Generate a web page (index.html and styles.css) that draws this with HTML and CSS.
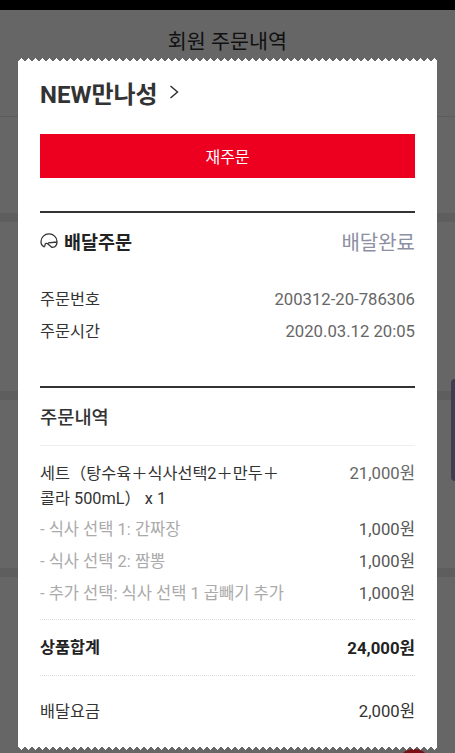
FILE: index.html
```html
<!DOCTYPE html>
<html lang="ko">
<head>
<meta charset="utf-8">
<title>회원 주문내역</title>
<link rel="stylesheet" href="styles.css">
</head>
<body>
<div class="page">
  <div class="statusbar"></div>
  <header class="appbar"><h1>회원 주문내역</h1></header>
  <div class="bg-section s1"></div>
  <div class="bg-section s2"></div>
  <div class="bg-section s3"></div>
  <div class="bg-section s4"></div>
  <div class="side-tab"></div>
  <div class="red-dot"></div>

  <main class="receipt">
    <div class="store">
      <span>NEW만나성</span>
      <svg class="chev" width="12" height="16" viewBox="0 0 12 16"><path d="M2.5 2 L9.5 8 L2.5 14" fill="none" stroke="#333" stroke-width="1.5"/></svg>
    </div>
    <button class="reorder">재주문</button>

    <section class="block delivery">
      <div class="delivery-head">
        <div class="delivery-type">
          <svg width="18" height="18" viewBox="0 0 18 18"><path d="M4 14.8 C1.6 13.4 .9 11 1 9.5 A8 7.6 0 0 1 17 9.5 C17 12 16.2 14 14.5 14.8 L12 15.4 L8 12 C6.8 10.8 5 11.4 5 13 C5 14 4.6 14.6 4 14.8 M8.5 10.8 L16.8 10" fill="none" stroke="#333" stroke-width="1.3" stroke-linecap="round" stroke-linejoin="round"/></svg>
          <strong>배달주문</strong>
        </div>
        <span class="status">배달완료</span>
      </div>
      <div class="row info"><span>주문번호</span><span class="val">200312-20-786306</span></div>
      <div class="row info"><span>주문시간</span><span class="val">2020.03.12 20:05</span></div>
    </section>

    <section class="block items">
      <h2>주문내역</h2>
      <div class="row main-item"><span class="name">세트（탕수육＋식사선택2＋만두＋콜라 500mL） x 1</span><span class="price">21,000원</span></div>
      <div class="row option"><span>- 식사 선택 1: 간짜장</span><span class="price">1,000원</span></div>
      <div class="row option"><span>- 식사 선택 2: 짬뽕</span><span class="price">1,000원</span></div>
      <div class="row option"><span>- 추가 선택: 식사 선택 1 곱빼기 추가</span><span class="price">1,000원</span></div>
      <div class="row total"><span>상품합계</span><span>24,000원</span></div>
      <div class="row fee"><span>배달요금</span><span>2,000원</span></div>
    </section>
  </main>
</div>
</body>
</html>
```
FILE: styles.css
```css
* { box-sizing: border-box; }
html, body { margin: 0; padding: 0; height: 100%; }
body {
  font-family: Roboto, "Noto Sans CJK KR", sans-serif;
  color: #333;
  background: #666;
  overflow: hidden;
}
.page { position: relative; width: 455px; height: 753px; overflow: hidden; background: #666; }
.statusbar { height: 10px; background: #000; }
.appbar { height: 107px; border-bottom: 1px solid #5c5c5c; text-align: center; }
.appbar h1 { margin: 0; padding-top: 17px; font-size: 20.7px; line-height: 30px; font-weight: 400; color: #111; }
.bg-section { border-bottom: 9px solid #5e5e5e; }
.s1 { height: 105px; }
.s2 { height: 178px; }
.s3 { height: 177px; }
.s4 { height: 176px; border-bottom: 0; }
.side-tab {
  position: absolute; right: 0; top: 379px; width: 4px; height: 102px;
  background: #3f3d52; border-top-left-radius: 5px; border-bottom-left-radius: 5px;
}
.red-dot {
  position: absolute; left: 402px; top: 749px; width: 24px; height: 14px;
  background: #7a1015; border-radius: 50%;
}
.receipt {
  position: absolute; left: 18px; top: 62px; width: 419px; height: 684px;
  padding: 0 22px; background: #fff;
}
.receipt::before, .receipt::after {
  content: ""; position: absolute; left: 0; right: 0; height: 4px;
  background-size: 7px 4px; background-repeat: repeat-x;
}
.receipt::before {
  top: -4px;
  background-image: conic-gradient(from 135deg at 50% 0, #fff 90deg, transparent 0);
}
.receipt::after {
  bottom: -4px;
  background-image: conic-gradient(from -45deg at 50% 100%, #fff 90deg, transparent 0);
}
.store { display: flex; align-items: center; gap: 10px; height: 36px; margin-top: 12px; font-size: 24px; font-weight: 700; color: #333; }
.reorder {
  display: block; width: 375px; height: 44px; margin-top: 24px; border: 0; padding: 0;
  background: #ed001f; color: #fff; font: 400 16px Roboto, "Noto Sans CJK KR", sans-serif;
}
.block { border-top: 2px solid #333; }
.delivery { margin-top: 33px; height: 175px; }
.delivery-head { display: flex; justify-content: space-between; align-items: center; height: 56px; margin-bottom: 15px; }
.delivery-type { display: flex; align-items: center; gap: 6px; font-size: 18.5px; }
.delivery-type strong { font-weight: 700; color: #222; }
.status { font-size: 20px; color: #8d8fa3; }
.row { display: flex; justify-content: space-between; font-size: 16.3px; line-height: 32px; }
.info { color: #333; }
.val { color: #666; font-size: 16.7px; }
.items h2 {
  margin: 0; height: 58px; line-height: 60px; font-size: 18.7px; font-weight: 500; color: #333;
  border-bottom: 1px solid #eee;
}
.main-item { margin-top: 15px; margin-bottom: 3px; align-items: flex-start; line-height: 25px; }
.main-item .name { width: 240px; }
.price { font-size: 16.7px; color: #555; }
.main-item .price { color: #666; }
.option { color: #aaa; height: 32px; }
.option span:first-child { font-size: 16.5px; }
.option .price { color: #555; }
.total {
  margin-top: 9px; height: 57px; line-height: 56px; font-weight: 700; color: #222;
  border-top: 1px dotted #ddd; border-bottom: 1px dotted #ddd;
}
.total span:last-child { font-size: 16.8px; }
.fee span:last-child { font-size: 16.7px; }
.fee { height: 70px; line-height: 72px; color: #333; }
```
